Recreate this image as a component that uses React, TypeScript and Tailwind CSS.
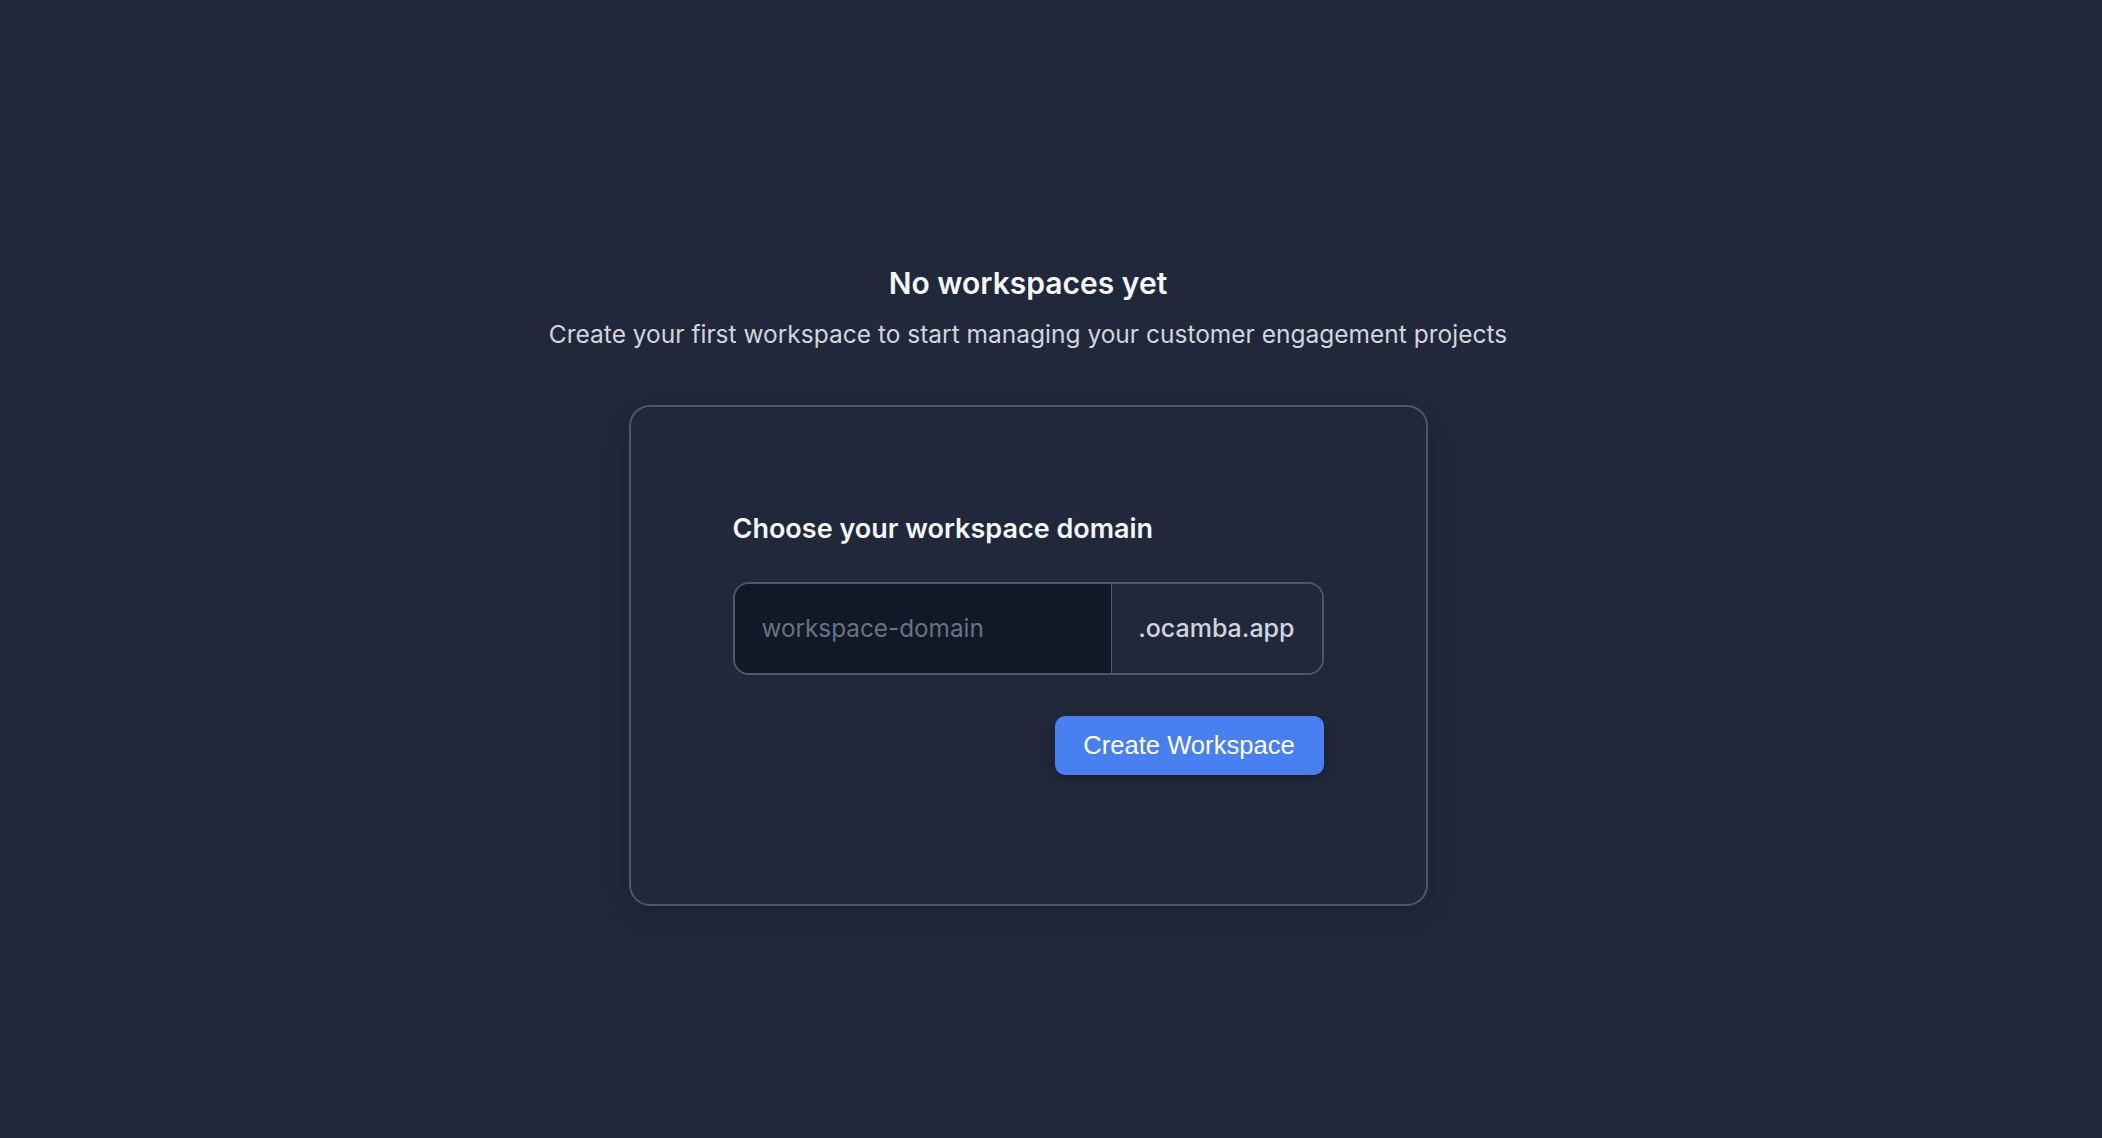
import React from "react";

export default function App() {
  return (
    <div
      className="min-h-screen w-full bg-[#212839] flex flex-col items-center pt-[263px] pr-[46px]"
      style={{ fontFamily: "Inter, 'Noto Sans', sans-serif" }}
    >
      <h2 className="text-[30px] leading-[40px] font-semibold text-[#f3f6fc]">
        No workspaces yet
      </h2>
      <p className="mt-[13px] text-[24.5px] leading-[36px] text-[#d1d5de]">
        Create your first workspace to start managing your customer engagement projects
      </p>
      <div className="mt-[53px] w-[799px] h-[501px] border-[2.5px] border-[#4f5768] rounded-[21px] pt-[102px] px-[102px] shadow-[0_10px_25px_rgba(0,0,0,0.15)]">
        <div className="text-[27px] leading-[40px] font-semibold text-[#f3f5fa]">
          Choose your workspace domain
        </div>
        <div className="mt-[33px] flex h-[93px] rounded-[16px] border-[2.5px] border-[#4f5768] overflow-hidden">
          <input
            type="text"
            placeholder="workspace-domain"
            className="flex-1 min-w-0 bg-[#111828] pl-[27px] pr-[16px] text-[24.3px] text-[#e5e7eb] placeholder:text-[#6b7280] outline-none"
            style={{ fontFamily: "Inter, 'Noto Sans', sans-serif" }}
          />
          <div className="flex items-center border-l-[1.5px] border-[#4f5768] bg-[#212839] pl-[26px] pr-[27px] text-[25px] font-medium text-[#d1d5e0]">
            .ocamba.app
          </div>
        </div>
        <div className="mt-[41px] flex justify-end">
          <button
            className="h-[59px] w-[269px] rounded-[10px] bg-[#4880ef] text-[25.6px] text-white shadow-[0_4px_10px_rgba(0,0,0,0.2)]"
            style={{ fontFamily: "'Liberation Sans', Arial, sans-serif" }}
          >
            Create Workspace
          </button>
        </div>
      </div>
    </div>
  );
}
